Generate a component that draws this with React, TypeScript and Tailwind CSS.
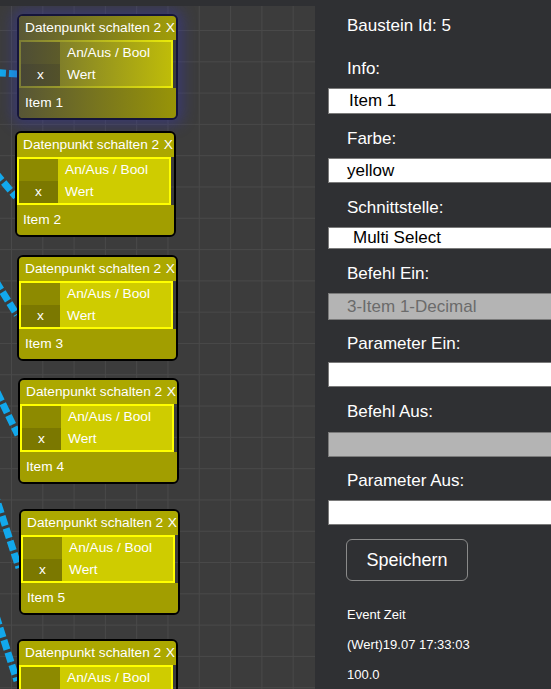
import clsx from "clsx";

const nodes = [
  { x: 17, y: 14, info: "Item 1", selected: true },
  { x: 15, y: 131, info: "Item 2", selected: false },
  { x: 17, y: 255, info: "Item 3", selected: false },
  { x: 18, y: 378, info: "Item 4", selected: false },
  { x: 19, y: 509, info: "Item 5", selected: false },
  { x: 17, y: 639, info: "Item 6", selected: false },
];

// connection lines, page coords
const links = [
  "M-30 71 L18 74",
  "M-30 143 L16 197",
  "M-25 248 L17 315",
  "M-20 357 L18 435",
  "M-10 479 L19 568",
  "M-8 603 L17 681",
];

const fields = [
  { label: "Info:", value: "Item 1", lh: 44, h: 26, pl: 20, kind: "input" },
  { label: "Farbe:", value: "yellow", lh: 44, h: 25, pl: 18, kind: "input" },
  { label: "Schnittstelle:", value: "Multi Select", lh: 44, h: 22, pl: 24, kind: "input" },
  { label: "Befehl Ein:", value: "3-Item 1-Decimal", lh: 44, h: 27, pl: 18, kind: "disabled" },
  { label: "Parameter Ein:", value: "", lh: 42, h: 25, pl: 18, kind: "input" },
  { label: "Befehl Aus:", value: "", lh: 45, h: 25, pl: 18, kind: "disabled" },
  { label: "Parameter Aus:", value: "", lh: 43, h: 25, pl: 18, kind: "input" },
];

const Node = ({ x, y, info, selected }: { x: number; y: number; info: string; selected: boolean }) => {
  return (
    <div
      className={clsx(
        "absolute w-[161px] h-[106px] rounded-[6px] border-2 overflow-hidden flex flex-col text-white text-[13.7px] leading-none",
        selected ? "border-[#15153a] shadow-[0_0_14px_5px_rgba(55,55,170,0.45)]" : "border-black"
      )}
      style={{ left: x, top: y - 6 }}
    >
      {/* header */}
      <div className="h-[24px] bg-[#aca800] flex items-center justify-between pl-[6px] pr-[1px] whitespace-nowrap">
        <span className="relative z-10">Datenpunkt schalten 2</span>
        <span className="relative z-10">X</span>
      </div>
      {/* ports */}
      <div className="h-[48px] mr-[3px] border-2 border-[#ffff00] grid grid-cols-[39px_1fr] grid-rows-2">
        <div className="bg-[#8d8a00]"></div>
        <div className="bg-[#cfcc00] flex items-center pl-[7px]">
          <span className="relative z-10">An/Aus / Bool</span>
        </div>
        <div className="bg-[#7b7800] flex items-center justify-center">
          <span className="relative z-10">x</span>
        </div>
        <div className="bg-[#cfcc00] flex items-center pl-[7px]">
          <span className="relative z-10">Wert</span>
        </div>
      </div>
      {/* footer */}
      <div className="flex-1 bg-[#a29e00] flex items-center pl-[6px]">
        <span className="relative z-10">{info}</span>
      </div>
      {selected && (
        <div className="absolute inset-0 pointer-events-none bg-linear-to-r from-[#24245a99] via-[#24245a55] to-[#24245a14]"></div>
      )}
    </div>
  );
};

const App = () => {
  return (
    <div className="w-[551px] h-[689px] overflow-hidden flex bg-[#2f3033] font-['Liberation_Sans',Arial,sans-serif]">
      {/* canvas */}
      <div className="w-[315px] h-full pt-[6px] shrink-0">
        <div className="relative h-full overflow-hidden bg-[#3c3c3c] bg-[linear-gradient(to_right,#494949_1px,transparent_1px),linear-gradient(to_bottom,#494949_1px,transparent_1px)] bg-[size:31.3px_31.3px] bg-[position:11px_24px]">
          <svg className="absolute inset-0" width="315" height="683" viewBox="0 6 315 683">
            {links.map((d, i) => (
              <path key={i} d={d} fill="none" stroke="#12a8ec" strokeWidth="7" strokeDasharray="10 3" />
            ))}
          </svg>
          {nodes.map((n) => (
            <Node key={n.info} {...n} />
          ))}
        </div>
      </div>

      {/* properties panel */}
      <div className="flex-1 h-full overflow-hidden pl-[13px] text-white">
        <div className="h-[44px] pt-[7px] flex items-center pl-[19px] text-[17px]">Baustein Id: 5</div>
        {fields.map((f) => (
          <div key={f.label}>
            <div className="flex items-center pl-[19px] pt-[5px] text-[17px]" style={{ height: f.lh }}>
              {f.label}
            </div>
            <div
              className={clsx(
                "w-[240px] border border-[#7a7a7a] flex items-center text-[17px] whitespace-nowrap",
                f.kind == "disabled" ? "bg-[#b4b4b4] text-[#6b6b6b]" : "bg-white text-black"
              )}
              style={{ height: f.h, paddingLeft: f.pl }}
            >
              {f.value}
            </div>
          </div>
        ))}
        <button
          type="button"
          className="ml-[18px] mt-[14px] w-[122px] h-[42px] rounded-[6px] border border-[#8a8a8a] text-[18px] text-white"
        >
          Speichern
        </button>
        <div className="mt-[19px] pl-[19px] text-[13px]">
          <div className="h-[30px] flex items-center">Event Zeit</div>
          <div className="h-[30px] flex items-center">(Wert)19.07 17:33:03</div>
          <div className="h-[30px] flex items-center">100.0</div>
        </div>
      </div>
    </div>
  );
};

export default App;
